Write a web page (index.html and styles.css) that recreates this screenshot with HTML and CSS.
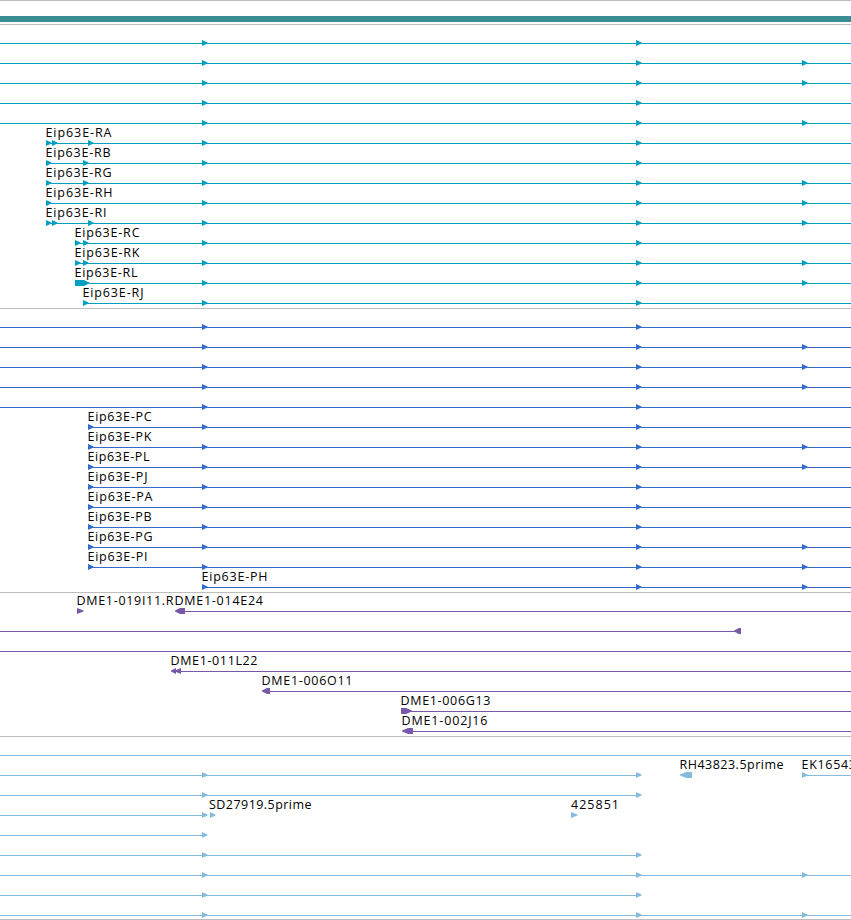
FILE: index.html
```html
<!DOCTYPE html>
<html lang="en">
<head>
<meta charset="utf-8">
<title>Genome tracks</title>
<link rel="stylesheet" href="styles.css">
</head>
<body>
<svg class="defs" width="0" height="0">
<defs>
<marker id="mt" markerUnits="userSpaceOnUse" markerWidth="6" markerHeight="6" refX="0" refY="3.5"><path class="teal" d="M0 0L5.5 2.6V3.4L0 6z"/></marker>
<marker id="mb" markerUnits="userSpaceOnUse" markerWidth="6" markerHeight="6" refX="0" refY="3.5"><path class="blue" d="M0 0L5.5 2.6V3.4L0 6z"/></marker>
<marker id="ms" markerUnits="userSpaceOnUse" markerWidth="6" markerHeight="6" refX="0" refY="3.5"><path class="sky" d="M0 0L5.5 2.6V3.4L0 6z"/></marker>
</defs>
</svg>
<main class="tracks">
<section class="track ruler"><div class="contig"></div></section>
<section class="track">
<svg viewBox="0 25 851 283" width="851" height="283">
<path class="line teal-line" d="M-10 43.5H202H636H860M-10 63.5H202H636H802H860M-10 83.5H202H636H802H860M-10 103.5H202H636H860M-10 123.5H202H636H802H860
M46 143.5H52H88H202H636H860M46 163.5H83H202H636H860M46 183.5H83H202H636H802H860M46 203.5H202H636H802H860M46 223.5H52H88H202H636H802H860
M75 243.5H83H202H636H860M75 263.5H83H202H636H802H860M75 283.5H202H636H802H860M83 303.5H202H636H860"/>
<path class="teal" d="M75 280h9l6 3-6 3h-9z"/>
<g class="labels">
<text x="45.500" y="137" textLength="66">Eip63E-RA</text><text x="45.500" y="157" textLength="65">Eip63E-RB</text><text x="45.500" y="177" textLength="66">Eip63E-RG</text><text x="45.500" y="197" textLength="67">Eip63E-RH</text><text x="45.500" y="217" textLength="61">Eip63E-RI</text>
<text x="74.500" y="237" textLength="65">Eip63E-RC</text><text x="74.500" y="257" textLength="65">Eip63E-RK</text><text x="74.500" y="277" textLength="63">Eip63E-RL</text><text x="82.500" y="297" textLength="61">Eip63E-RJ</text>
</g>
</svg>
</section>
<section class="track">
<svg viewBox="0 309 851 283" width="851" height="283">
<path class="line blue-line" d="M-10 327.5H202H636H860M-10 347.5H202H636H802H860M-10 367.5H202H636H802H860M-10 387.5H202H636H802H860M-10 407.5H202H636H860
M88 427.5H202H636H860M88 447.5H202H636H802H860M88 467.5H202H636H802H860M88 487.5H202H636H860M88 507.5H202H636H860M88 527.5H202H636H860M88 547.5H202H636H802H860M88 567.5H202H636H802H860M202 587.5H636H802H860"/>
<g class="labels">
<text x="87.500" y="421" textLength="64">Eip63E-PC</text><text x="87.500" y="441" textLength="64">Eip63E-PK</text><text x="87.500" y="461" textLength="62">Eip63E-PL</text><text x="87.500" y="481" textLength="60">Eip63E-PJ</text><text x="87.500" y="501" textLength="65">Eip63E-PA</text><text x="87.500" y="521" textLength="64">Eip63E-PB</text><text x="87.500" y="541" textLength="65">Eip63E-PG</text><text x="87.500" y="561" textLength="60">Eip63E-PI</text><text x="201.500" y="581" textLength="66">Eip63E-PH</text>
</g>
</svg>
</section>
<section class="track">
<svg viewBox="0 593 851 143" width="851" height="143">
<path class="line purple-line" d="M185 611.500H851M0 631.500H736M0 651.500H851M176 671.500H851M268 691.500H851M408 711.500H851M411 731.500H851"/>
<path class="purple" d="M77 608l6.500 2.600v.8L77 614zM175 610.500l5-2.500h5v6h-5l-5-2.500zM734 630.500l5-2.500h2v6h-2l-5-2.500zM171 670.500l5-2.500v2l5-2v6l-5-2v2l-5-2.500zM262 690.500l5-2.500h3v6h-3l-5-2.500zM401 708h5l6 2.600v.8l-6 2.600h-5zM402 730.500l6-2.500h5v6h-5l-6-2.500z"/>
<g class="labels">
<text x="76.500" y="605" textLength="97">DME1-019I11.R</text><text x="174.500" y="605" textLength="88.500">DME1-014E24</text><text x="170.500" y="665" textLength="87">DME1-011L22</text><text x="261.500" y="685" textLength="91">DME1-006O11</text><text x="400.500" y="705" textLength="90">DME1-006G13</text><text x="401.500" y="725" textLength="86">DME1-002J16</text>
</g>
</svg>
</section>
<section class="track last">
<svg viewBox="0 737 851 182" width="851" height="182">
<path class="line sky-line" d="M-10 755.500H860M-10 775.500H202H636M802 775.500H860M-10 795.500H202H636M-10 815.500H202M-10 835.500H202M-10 855.500H202H636M-10 875.500H202H636H802H860M-10 895.500H202H636M-10 915.500H202H636H802H860"/>
<path class="sky" d="M210 812l5.500 2.600v.8L210 818zM571 812l6.500 2.600v.8L571 818zM680 774.500l6-2.500h6v6h-6l-6-2.500z"/>
<g class="labels">
<text x="679.500" y="769" textLength="104">RH43823.5prime</text><text x="801.500" y="769" textLength="54.500">EK16543</text><text x="209" y="809" textLength="102.500">SD27919.5prime</text><text x="571" y="809" textLength="48">425851</text>
</g>
</svg>
</section>
</main>
</body>
</html>
```
FILE: styles.css
```css
body { margin: 0; background: #fff; overflow: hidden; }
.defs { position: absolute; }
.tracks { width: 851px; height: 920px; }
.track { border-top: 1px solid #bebebe; }
.track svg { display: block; }
.ruler { height: 24px; padding-top: 15px; box-sizing: border-box; }
.contig { height: 6px; background: #3b8d94; }
.last { border-bottom: 1px solid #bebebe; }
.line { fill: none; stroke-width: 1; shape-rendering: crispEdges; }
.teal-line { stroke: #009fbf; marker-mid: url(#mt); }
.blue-line { stroke: #326bcd; marker-mid: url(#mb); }
.purple-line { stroke: #7858a8; }
.sky-line { stroke: #86bbdd; marker-mid: url(#ms); }
.teal { fill: #009fbf; }
.blue { fill: #326bcd; }
.purple { fill: #7858a8; }
.sky { fill: #86bbdd; }
.labels { font: 12.5px "Open Sans", "Noto Sans", sans-serif; fill: #000; }
```
